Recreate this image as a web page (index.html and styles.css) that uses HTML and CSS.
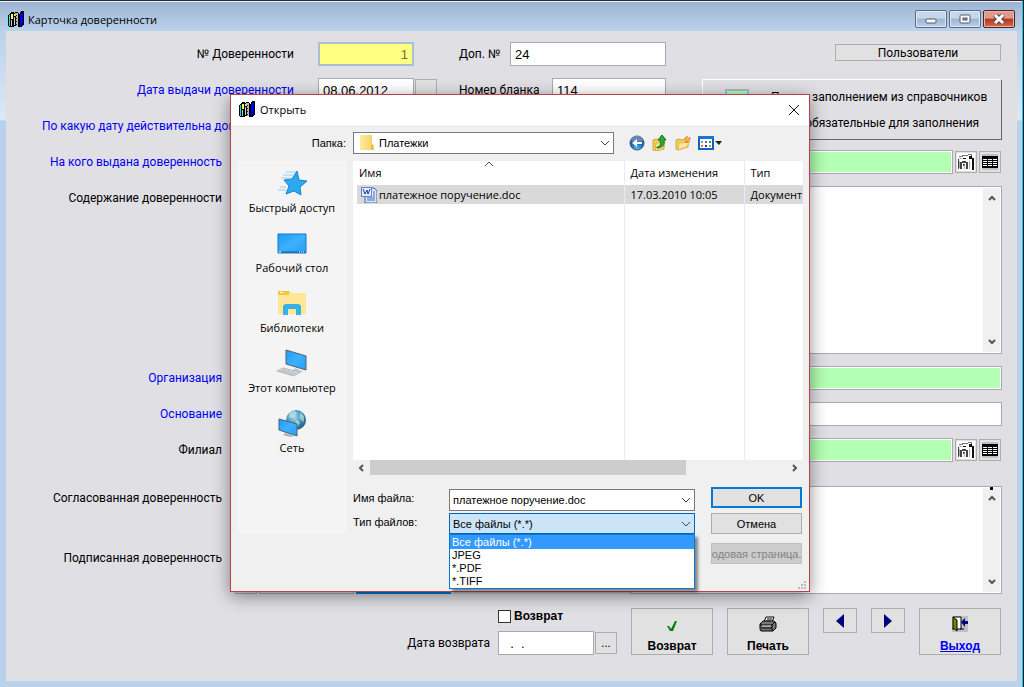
FILE: index.html
```html
<!DOCTYPE html>
<html lang="ru">
<head>
<meta charset="utf-8">
<title>Карточка доверенности</title>
<link rel="stylesheet" href="styles.css">
</head>
<body>
<svg class="defs" aria-hidden="true">
  <defs>
    <linearGradient id="screen" x1="0" y1="0" x2="1" y2="1"><stop offset="0" stop-color="#1a9cf5"/><stop offset="0.5" stop-color="#3fb0ff"/><stop offset="1" stop-color="#1e9ffa"/></linearGradient>
    <linearGradient id="fold" x1="0" y1="0" x2="1" y2="0"><stop offset="0" stop-color="#ffe9a0"/><stop offset="1" stop-color="#f5cf62"/></linearGradient>
    <radialGradient id="orb" cx="0.5" cy="0.9" r="0.9"><stop offset="0" stop-color="#4cc3ee"/><stop offset="0.5" stop-color="#1f65b0"/><stop offset="1" stop-color="#2b4a80"/></radialGradient>
    <radialGradient id="earth" cx="0.4" cy="0.35" r="0.7"><stop offset="0" stop-color="#a8d8e8"/><stop offset="0.5" stop-color="#4a9cbc"/><stop offset="1" stop-color="#1c5878"/></radialGradient>
    <symbol id="books" viewBox="0 0 16 16">
      <g shape-rendering="crispEdges">
        <path d="M1 3h1V2h1V1h3v1h1V1h3v1h1v1h1V1h1V0h3v14h-1v1h-1v1h-4v-1H6v1H1v-1H0V4h1z" fill="#000"/>
        <path d="M1 4h1v11H1z" fill="#00e5f5"/><path d="M3 3h2v5H3z" fill="#ffff40"/>
        <path d="M3 9h1v6H3zM6 6h1v8H6z" fill="#c8c8c8"/><path d="M6 3h1v2H6z" fill="#f0f060"/>
        <path d="M7 2h3v13H8V5H7z" fill="#b8b8b8"/><path d="M8 4h1v1H8zM8 7h1v1H8zM8 10h1v1H8zM8 13h1v1H8z" fill="#222"/>
        <path d="M12 3h1v12h-1zM13 2h2v11h-1v1h-1z" fill="#0000e8"/>
      </g>
    </symbol>
    <symbol id="chev-down" viewBox="0 0 10 6"><path d="M1 1l4 4 4-4" fill="none" stroke="currentColor"/></symbol>
    <symbol id="chev-up" viewBox="0 0 10 6"><path d="M1 5l4-4 4 4" fill="none" stroke="currentColor"/></symbol>
    <symbol id="scroll-down" viewBox="0 0 8 6"><path d="M1 1l3 3 3-3" fill="none" stroke="#555" stroke-width="2"/></symbol>
    <symbol id="scroll-up" viewBox="0 0 8 6"><path d="M1 5l3-3 3 3" fill="none" stroke="#555" stroke-width="2"/></symbol>
    <symbol id="grid-icon" viewBox="0 0 16 16"><path d="M0 0h16v16H0z" fill="#c0c0c0"/><path d="M0 2h16v12H0z"/><path d="M1 5h4v1H1zM6 5h4v1H6zM11 5h4v1h-4zM1 7h4v1H1zM6 7h4v1H6zM11 7h4v1h-4zM1 9h4v1H1zM6 9h4v1H6zM11 9h4v1h-4zM1 11h4v1H1zM6 11h4v1H6zM11 11h4v1h-4z" fill="#fff"/></symbol>
    <symbol id="card-icon" viewBox="0 0 18 18">
      <path d="M0 0h18v18H0z" fill="#fff"/>
      <g shape-rendering="crispEdges">
        <path d="M5 2h6v1H5zM2 3h4v1H2zM11 1h3v1h-3zM14 1h1v3h-1z" fill="#777"/>
        <path d="M12 3h3v3h-3zM15 5h2v12h-2zM6 5h3v1H6z" fill="#111"/>
        <path d="M1 6h1v10H1zM3 9h2v7H3zM5 8h4v2H5zM9 9h2v7H9zM6 11h2v2H6z" fill="#444"/>
        <path d="M2 5h3v1H2zM2 8h1v7H2zM7 12h1v4H7zM12 8h1v8h-1z" fill="#aaa"/>
      </g>
    </symbol>
  </defs>
</svg>

<main class="window">
  <header class="titlebar">
    <svg class="app-icon"><use href="#books"/></svg>
    <h1 class="title">Карточка доверенности</h1>
    <div class="window-buttons">
      <button class="wbtn" aria-label="Свернуть"><svg class="low" width="12" height="6"><rect x="1" y="1" width="10" height="4" rx="1" fill="#fff" stroke="#555b68"/></svg></button>
      <button class="wbtn" aria-label="Развернуть"><svg width="12" height="10"><rect x="1" y="1" width="10" height="8" rx="1" fill="#fff" stroke="#555b68"/><rect x="4" y="4" width="4" height="2" fill="#7f98bb" stroke="#555b68"/></svg></button>
      <button class="wbtn wbtn-close" aria-label="Закрыть"><svg width="12" height="10"><path d="M2 1l8 8M10 1L2 9" stroke="#4b4450" stroke-width="5"/><path d="M2 1l8 8M10 1L2 9" stroke="#fff" stroke-width="3"/></svg></button>
    </div>
  </header>

  <form class="card">
    <section class="top">
      <label class="lbl" for="num">№ Доверенности</label>
      <input class="field field-yellow" id="num" value="1">
      <div class="pair"><label for="extra">Доп. №</label><input class="field field-extra" id="extra" value="24"></div>
      <button type="button" class="btn users">Пользователи</button>

      <label class="lbl req" for="issued">Дата выдачи доверенности</label>
      <div class="date"><input class="field" id="issued" value="08.06.2012"><button type="button" class="btn mini" aria-label="Календарь"></button></div>
      <div class="pair"><label for="blank">Номер бланка</label><input class="field field-blank" id="blank" value="114"></div>
      <aside class="legend">
        <div class="legend-row"><span class="swatch swatch-green"></span>Поля с заполнением из справочников</div>
        <div class="legend-row"><span class="swatch swatch-blue"></span>Поля, обязательные для заполнения</div>
      </aside>

      <label class="lbl req" for="until">По какую дату действительна доверенность</label>
      <div class="date"><input class="field" id="until"></div>
    </section>

    <section class="details">
      <label class="lbl req" for="person">На кого выдана доверенность</label>
      <div class="lookup"><input class="field field-green" id="person"><button type="button" class="btn mini" aria-label="Карточка"><svg width="18" height="18"><use href="#card-icon"/></svg></button><button type="button" class="btn mini" aria-label="Справочник"><svg width="16" height="16"><use href="#grid-icon"/></svg></button></div>

      <label class="lbl" for="content">Содержание доверенности</label>
      <div class="memo memo-tall"><textarea id="content"></textarea><div class="vscroll"><svg width="8" height="6"><use href="#scroll-up"/></svg><svg width="8" height="6"><use href="#scroll-down"/></svg></div></div>

      <label class="lbl req" for="org">Организация</label>
      <input class="field field-green" id="org">

      <label class="lbl req" for="basis">Основание</label>
      <input class="field" id="basis">

      <label class="lbl" for="branch">Филиал</label>
      <div class="lookup"><input class="field field-green" id="branch"><button type="button" class="btn mini" aria-label="Карточка"><svg width="18" height="18"><use href="#card-icon"/></svg></button><button type="button" class="btn mini" aria-label="Справочник"><svg width="16" height="16"><use href="#grid-icon"/></svg></button></div>
    </section>

    <section class="files">
      <div class="file-labels"><span class="lbl">Согласованная доверенность</span><span class="lbl">Подписанная доверенность</span></div>
      <div class="file-buttons"><button type="button" class="btn mini" aria-label="Выбрать"></button><button type="button" class="btn wide" aria-label="Просмотр"></button><button type="button" class="btn wide focus" aria-label="Загрузить"></button></div>
      <div class="memo memo-files"><textarea aria-label="Примечание"></textarea><div class="vscroll"><svg width="8" height="6"><use href="#scroll-up"/></svg><svg width="8" height="6"><use href="#scroll-down"/></svg></div><span class="marker"></span></div>
    </section>

    <footer class="actions">
      <div class="return">
        <label class="check"><input type="checkbox">Возврат</label>
        <label for="rdate">Дата возврата</label>
        <div class="date"><input class="field" id="rdate" value="  .  ."><button type="button" class="btn mini">...</button></div>
      </div>
      <button type="button" class="btn big"><svg width="12" height="12"><path d="M1 6l2 0 2 3 4-8 2 0-4 10H4z" fill="#008000"/></svg>Возврат</button>
      <button type="button" class="btn big"><svg width="18" height="16"><path d="M5 6l2-5h8l-2 5z" fill="#fff" stroke="#000"/><path d="M8 3h5M7 5h5" stroke="#000"/><path d="M1 8l3-3h11l2 2v5l-3 3H2l-1-2z" fill="#777" stroke="#000"/><path d="M1 9h12l3-3M2 12h11M13 9v6" fill="none" stroke="#000"/><path d="M3 10h9" stroke="#ddd"/></svg>Печать</button>
      <button type="button" class="btn nav" aria-label="Назад"><svg width="8" height="14"><path d="M8 0v14L0 7z" fill="#000080"/></svg></button>
      <button type="button" class="btn nav" aria-label="Вперёд"><svg width="8" height="14"><path d="M0 0v14l8-7z" fill="#000080"/></svg></button>
      <button type="button" class="btn big exit"><svg width="16" height="16"><path d="M0 0h16v16H0z" fill="#c0c0c0"/><path d="M1 1h8v12H5" fill="#fff" stroke="#000"/><path d="M1 1l4 3v11l-4-3z" fill="#808000" stroke="#000"/><path d="M0 13h2M8 13h4" stroke="#000"/><path d="M9 6l4-4v3h3v3h-3v3z" fill="#000080"/></svg>Выход</button>
    </footer>
  </form>
</main>

<section class="dialog" role="dialog" aria-label="Открыть">
  <header class="dialog-title">
    <svg class="app-icon"><use href="#books"/></svg>
    <h2 class="title">Открыть</h2>
    <button class="close" aria-label="Закрыть"><svg width="12" height="12"><path d="M1 1l10 10M11 1L1 11" stroke="#111"/></svg></button>
  </header>

  <div class="toolbar">
    <label class="small" for="folder">Папка:</label>
    <div class="combo combo-folder">
      <svg class="combo-icon" width="14" height="16"><path d="M0 0h12v9l2 1v5H0z" fill="url(#fold)"/><path d="M11 10h2v5h-2z" fill="#e9bd49"/></svg>
      <select id="folder"><option>Платежки</option></select>
      <svg class="chev" width="10" height="6"><use href="#chev-down"/></svg>
    </div>
    <div class="tools">
      <button class="tool" aria-label="Назад"><svg width="16" height="16"><circle cx="8" cy="8" r="7" fill="url(#orb)" stroke="#42577f"/><path d="M2 6a6 5 0 0 1 12 0q-6 1-12 0z" fill="#fff" opacity=".3"/><path d="M3 8l5-4v3h5v2H8v3z" fill="#fff"/></svg></button>
      <button class="tool" aria-label="Вверх"><svg width="16" height="16"><path d="M1 5l4-1 1 1 6-1v10l-9 2-2-1z" fill="#f0cc58" stroke="#cfa73c"/><path d="M4 8l9-1-2 7-8 2z" fill="#fbe391" stroke="#d8b04a"/><path d="M5 12c3 0 4-2 3-7H6l4-5 4 5h-2c1 5-2 8-7 8z" fill="#2cab32" stroke="#14751b"/></svg></button>
      <button class="tool" aria-label="Новая папка"><svg width="16" height="16"><path d="M1 5l4-1 1 1 7-1v8l-10 3-2-1z" fill="#f3cf60" stroke="#d3a93f"/><path d="M4 8l10-1-2 5-9 3z" fill="#fde79c" stroke="#dfb750"/><path d="M12 1v7M9 4h7M10 2l5 5M15 2l-5 5" stroke="#f0561e"/><circle cx="12" cy="4" r="2" fill="#ffb637"/></svg></button>
      <button class="tool" aria-label="Вид"><svg width="24" height="16"><path d="M1 2h14v12H1z" fill="#fff" stroke="#0b63c7" stroke-width="2"/><path d="M0 1h16v3H0z" fill="#1b73d4"/><path d="M3 6h2v2H3z" fill="#999"/><path d="M7 6h2v2H7z" fill="#5a62c8"/><path d="M11 6h2v2h-2z" fill="#2d9e35"/><path d="M3 10h2v2H3z" fill="#ee6a3c"/><path d="M7 10h2v2H7z" fill="#203a90"/><path d="M11 10h2v2h-2z" fill="#c99b22"/><path d="M17 6h7l-3 4z" fill="#222"/></svg></button>
    </div>
  </div>

  <div class="dialog-body">
    <nav class="places">
      <a href="#quick"><svg width="32" height="28"><path d="M21 2l2 9 8 1-7 6 1 8-7-4-8 3 3-8-5-6 8-1z" fill="#2caaf0" stroke="#1784c8"/><path d="M10 3h10M7 6h10M5 9h11M4 18h6M2 21h8" stroke="#9ccdf0"/></svg>Быстрый доступ</a>
      <a href="#desktop"><svg width="32" height="28"><path d="M2 5h28v19H2z" fill="url(#screen)" stroke="#1979bd"/><path d="M3 23h26" stroke="#0e5c96"/><path d="M3 23h2M23 23h1M25 23h1M27 23h1" stroke="#fff"/></svg>Рабочий стол</a>
      <a href="#libs"><svg width="32" height="28"><path d="M2 2h12l2 2h14v21H2z" fill="#ffe694"/><path d="M2 2h11v4H2z" fill="#f5c342"/><path d="M4 3h3v1H4z" fill="#fff"/><path d="M7 26V17l2-2h14l2 2v9h-5v-6h-8v6z" fill="#33b1e8"/></svg>Библиотеки</a>
      <a href="#pc"><svg width="32" height="28"><path d="M10 1l20 6v14l-20-6z" fill="url(#screen)" stroke="#52616e"/><path d="M19 19l5 2 3 2-6 2-5-2z" fill="#c3c9ce"/><path d="M7 19l17 4-6 4-17-5z" fill="#d9dcdf" stroke="#b4b9bd"/><path d="M6 21l15 4M4 22l14 4M10 20l-5 3M14 21l-5 4M18 22l-5 4" stroke="#b9bec2"/></svg>Этот компьютер</a>
      <a href="#net"><svg width="32" height="28"><circle cx="20" cy="11" r="10" fill="url(#earth)"/><path d="M13 4l5-3 3 3-3 4-5 1zM24 3l4 4v6l-4-3zM19 10l5 3-3 6z" fill="#cfe8ea" opacity=".6"/><path d="M3 10l18 5v12L3 21z" fill="url(#screen)" stroke="#52616e"/><path d="M9 24l8 2 2 1-5 1-7-2z" fill="#aeb6bc"/></svg>Сеть</a>
    </nav>

    <div class="pane">
      <div class="list">
        <svg class="sort" width="10" height="6"><use href="#chev-up"/></svg>
        <table class="files-table">
          <thead><tr><th class="c-name">Имя</th><th class="c-date">Дата изменения</th><th>Тип</th></tr></thead>
          <tbody>
            <tr class="sel"><td><span class="file"><svg width="16" height="16"><path d="M4 1h9l3 3v12H4z" fill="#dce9fb" stroke="#3a5fa8"/><path d="M12 5h2M12 7h2M12 9h2M6 13h8M6 11h8" stroke="#3f6dc0"/><path d="M0 0h11v10H0z" fill="#5f86cf"/><path d="M1 1h9v8H1z" fill="#e3ecfb"/><path d="M2 2l2 5 2-4 1 4 2-5" fill="none" stroke="#1c3f94"/></svg>платежное поручение.doc</span></td><td>17.03.2010 10:05</td><td>Документ Microsoft Word</td></tr>
            <tr class="blank"><td></td><td></td><td></td></tr>
          </tbody>
        </table>
      </div>
      <div class="hscroll"><svg width="6" height="8"><path d="M5 1L2 4l3 3" fill="none" stroke="#555" stroke-width="2"/></svg><span class="thumb"></span><svg width="6" height="8"><path d="M1 1l3 3-3 3" fill="none" stroke="#555" stroke-width="2"/></svg></div>

      <div class="bottom">
        <div class="fields">
          <label class="small" for="fname">Имя файла:</label>
          <div class="combo"><input id="fname" value="платежное поручение.doc"><svg class="chev" width="10" height="6"><use href="#chev-down"/></svg></div>
          <label class="small" for="ftype">Тип файлов:</label>
          <div class="combo combo-open">
            <select id="ftype"><option>Все файлы (*.*)</option></select>
            <svg class="chev" width="10" height="6"><use href="#chev-down"/></svg>
            <ul class="options" role="listbox" aria-label="Тип файлов">
              <li class="active" role="option" aria-selected="true">Все файлы (*.*)</li>
              <li role="option">JPEG</li>
              <li role="option">*.PDF</li>
              <li role="option">*.TIFF</li>
            </ul>
          </div>
        </div>
        <div class="dialog-buttons">
          <button class="btn primary">OK</button>
          <button class="btn">Отмена</button>
          <button class="btn codepage" disabled>Кодовая страница...</button>
        </div>
      </div>
    </div>
  </div>
  <svg class="grip" width="9" height="9"><path d="M6 0h2v2H6zM3 3h2v2H3zM6 3h2v2H6zM0 6h2v2H0zM3 6h2v2H3zM6 6h2v2H6z" fill="#bbb"/></svg>
</section>
</body>
</html>
```

FILE: styles.css
```css
:root {
  --form-font: "Liberation Sans", Arial, sans-serif;
  --label-font: Roboto, "Liberation Sans", sans-serif;
  --shell-font: "Open Sans", "Noto Sans", sans-serif;
  --line: #adadad;
  --face: #e1e1e1;
}

* { box-sizing: border-box; }

body {
  margin: 0;
  font: 12px/16px var(--form-font);
  color: #000;
}

button, input, select, textarea { font: inherit; color: inherit; margin: 0; border-radius: 0; }
svg { display: block; flex: none; }
.defs { position: absolute; width: 0; height: 0; }
.app-icon { width: 16px; height: 16px; }

.window {
  min-height: 100vh;
  display: flex;
  flex-direction: column;
  padding: 1px 6px 6px;
  border-top: 1px solid #2b2838;
  border-right: 1px solid #061820;
  box-shadow: inset -1px 0 #16c8ea, inset 0 1px #eef4fb;
  background: linear-gradient(#9bb4d2, #bad2ea 30px, #dce8f5 119px, #b9d1ea 120px);
}

.titlebar { display: flex; align-items: center; gap: 4px; height: 29px; padding: 6px 2px 0; }
.title { margin: 0; flex: 1; font: 11px/16px var(--shell-font); }
.titlebar .app-icon { margin-top: -2px; }
.window-buttons { display: flex; gap: 2px; margin-top: -2px; }
.wbtn {
  width: 32px; height: 18px; padding: 0;
  display: grid; place-items: center;
  border: 1px solid #596b88; border-radius: 2px;
  background: linear-gradient(#c5d7ea 45%, #9bb4d0 50%, #b9d1ea);
  box-shadow: inset 0 0 0 1px #dce9f7;
}
.low { margin-top: 4px; }
.wbtn-close {
  border-color: #571e20;
  background: linear-gradient(#dd9a8d 45%, #b8331d 50%, #cf6c4e);
  box-shadow: inset 0 0 0 1px #e8b5a8;
}

.card { flex: 1; background: #e0dfe4; padding: 11px 15px 0 0; font-family: var(--label-font); }
.lbl { text-align: right; line-height: 24px; white-space: nowrap; }
.req { color: #0000f0; }

.field {
  width: 100%; height: 24px; padding: 0 4px;
  border: 1px solid #a9a9ae; background: #fff;
  font-family: var(--form-font); font-size: 13px;
}
.field-yellow { width: 96px; text-align: right; background: #ffff80; color: #6d6d50; border: 2px solid #aabfd4; }
.field-green { background: #b3ffb3; box-shadow: inset 0 0 0 1px #fff; }

.btn {
  padding: 0; border: 1px solid var(--line); background: var(--face);
  display: flex; align-items: center; justify-content: center;
}
.mini { flex: none; width: 22px; height: 22px; }

.top {
  display: grid;
  grid-template-columns: 288px 120px 240px 1fr;
  grid-auto-rows: 24px;
  gap: 12px 0;
}
.top > .field-yellow, .top > .date { margin-left: 24px; }
.top > .pair { margin-left: 45px; width: 207px; }
.pair { display: flex; align-items: center; justify-content: space-between; white-space: nowrap; }
.field-extra { width: 156px; }
.field-blank { width: 114px; }
.date { display: flex; align-items: center; gap: 1px; width: 119px; }
.date .field { width: 96px; }
.users { width: 166px; height: 17px; margin: 2px 1px 0 0; justify-self: end; }
.legend {
  grid-row: 2 / span 2; grid-column: 4; justify-self: end;
  width: 300px; height: 61px; padding: 6px 12px 0 22px; margin-top: 1px;
  border: 1px solid #fff; border-right-color: #68686c; border-bottom-color: #68686c;
}
.legend-row { display: flex; align-items: center; gap: 22px; height: 26px; white-space: nowrap; padding-bottom: 4px; }
.swatch { width: 24px; height: 16px; border: 2px solid #a4bbd2; }
.swatch-green { background: #b3ffb3; }
.swatch-blue { background: #0000f0; }

.details {
  display: grid;
  grid-template-columns: 216px 1fr;
  gap: 12px;
  margin-top: 12px;
}
.lookup { display: flex; align-items: center; gap: 2px; padding-right: 1px; }
.lookup .field { flex: 1; }
.memo { position: relative; display: flex; background: #fff; border: 1px solid #a9a9ae; padding: 1px; }
.memo textarea { flex: 1; min-width: 0; border: 0; resize: none; background: none; }
.memo-tall { height: 168px; }
.vscroll { width: 17px; background: #f0f0f0; display: flex; flex-direction: column; align-items: center; justify-content: space-between; padding: 7px 0; }
.marker { position: absolute; right: 8px; top: 0; width: 3px; height: 3px; background: #000; }

.files { display: flex; margin-top: 24px; height: 108px; }
.file-labels { width: 216px; display: flex; flex-direction: column; gap: 36px; }
.file-buttons { display: flex; align-items: flex-end; gap: 2px; margin-left: 13px; flex: 1; }
.wide { width: 95px; height: 22px; }
.focus { border: 2px solid #0078d7; }
.memo-files { width: 372px; }

.actions { display: flex; justify-content: flex-end; align-items: flex-start; gap: 14px; margin-top: 14px; padding-right: 1px; }
.return { display: grid; grid-template-columns: auto 119px; column-gap: 8px; row-gap: 7px; align-items: center; }
.check { grid-column: 2; display: flex; align-items: center; gap: 3px; font-weight: bold; font-family: var(--form-font); }
.check input { appearance: none; width: 13px; height: 13px; border: 1px solid #333; background: #fff; }
.return .field { white-space: pre; }
.big { width: 82px; height: 47px; flex-direction: column; justify-content: flex-end; gap: 6px; font-weight: bold; font-family: var(--form-font); }
.exit { color: #0000f0; text-decoration: underline; }
.nav { width: 34px; height: 25px; }

/* File picker */
.dialog {
  position: absolute; left: 230px; top: 94px; width: 580px;
  border: 1px solid #b8424c; background: #f0f0f0;
  box-shadow: 0 4px 16px rgb(0 0 0 / 45%);
  font: 11px/16px var(--shell-font);
}
.dialog-title { display: flex; align-items: center; gap: 5px; height: 30px; padding: 0 9px 0 8px; background: #fff; }
.dialog-title .app-icon { margin-top: -2px; }
.close { border: 0; background: none; padding: 0; }
.toolbar { display: grid; grid-template-columns: 109px 261px 1fr; gap: 7px; height: 36px; align-items: center; padding-left: 6px; }
.toolbar label { text-align: right; }
.small { font: 11px/16px var(--form-font); white-space: nowrap; }
.combo { position: relative; height: 22px; font: 11px/16px var(--form-font); }
.combo select, .combo input {
  display: block; width: 100%; height: 100%; padding: 0 20px 0 3px;
  border: 1px solid #7a7a7a; background: #fff; appearance: none;
}
.combo-folder select { padding-left: 25px; }
.combo-icon { position: absolute; left: 7px; top: 3px; }
.chev { position: absolute; right: 4px; top: 8px; color: #444; }
.tools { display: flex; gap: 7px; padding-left: 8px; }
.tool { padding: 0; border: 0; background: none; }

.dialog-body { display: flex; gap: 6px; padding: 0 6px 27px; }
.places { width: 110px; height: 373px; padding-top: 8px; background: #f4f4f4; }
.places a {
  display: flex; flex-direction: column; align-items: center; gap: 3px;
  height: 60px; color: #000; text-decoration: none; white-space: nowrap;
}
.pane { flex: 1; min-width: 0; }
.list { position: relative; height: 299px; background: #fff; padding-left: 4px; overflow: hidden; }
.sort { position: absolute; left: 131px; top: 0; color: #555; }
.files-table { width: 100%; height: 100%; border-collapse: collapse; table-layout: fixed; }
.files-table th { height: 24px; font-weight: normal; text-align: left; padding: 0 2px; }
.files-table td { height: 19px; padding: 0; white-space: nowrap; overflow: hidden; }
.files-table th + th, .files-table td + td { border-left: 1px solid #e3edf7; padding-left: 6px; }
.files-table .blank td { height: auto; }
.c-name { width: 267px; }
.c-date { width: 120px; }
.sel { background: #d9d9d9; }
.file { display: flex; gap: 2px; padding-left: 4px; align-items: center; }
.hscroll { display: flex; align-items: center; justify-content: space-between; height: 15px; padding: 0 5px; }
.thumb { width: 316px; height: 15px; background: #cdcdcd; margin-right: auto; margin-left: 6px; }

.bottom { display: flex; gap: 16px; }
.fields { flex: 1; display: grid; grid-template-columns: 96px 1fr; grid-template-rows: 22px 21px; gap: 2px 0; padding-top: 14px; }
.fields .small { padding-top: 1px; }
.combo-open { height: 21px; }
.combo-open select { background: #cce4f7; border-color: #0067b8; }
.options {
  position: absolute; left: 0; right: 0; top: 21px; margin: 0; padding: 0; list-style: none;
  border: 1px solid #0078d7; background: #fff; box-shadow: 3px 3px 3px rgb(0 0 0 / 45%);
  line-height: 13px;
}
.options li { padding: 0 2px; }
.options .active { background: #3399ff; color: #fff; line-height: 14px; }
.dialog-buttons { width: 92px; display: flex; flex-direction: column; gap: 5px; padding: 12px 1px 0 0; }
.dialog-buttons .btn { height: 21px; font: 11px/16px var(--form-font); }
.dialog-buttons .primary { border: 2px solid #0078d7; }
.dialog-buttons .codepage { margin-top: 4px; background: #ccc; border-color: #bfbfbf; color: #838383; overflow: hidden; white-space: nowrap; }
.grip { position: absolute; right: 2px; bottom: 1px; }
```
